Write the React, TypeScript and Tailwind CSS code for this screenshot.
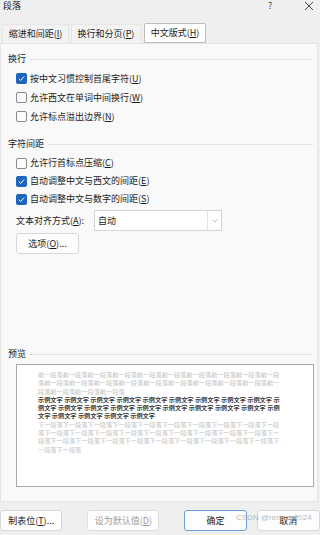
import { ChevronDown } from "lucide-react"

const before = "前一段落".repeat(23)
const sample = Array(23).fill("示例文字").join(" ")
const after = "下一段落".repeat(31)

function Key({ k }: { k: string }) {
    return (
        <>
            (<span className="underline underline-offset-1">{k}</span>)
        </>
    )
}

function Check({ checked, label, k }: { checked?: boolean; label: string; k: string }) {
    return (
        <div className="flex items-center h-[19px] pl-[8px] gap-[3px]">
            {checked ? (
                <span className="w-[11px] h-[11px] rounded-[2px] bg-[#1c66be] flex items-center justify-center">
                    <svg width="7" height="7" viewBox="0 0 8 8" fill="none">
                        <path d="M1 4.2 L3.1 6.2 L7 1.8" stroke="#fff" strokeWidth="1.1" />
                    </svg>
                </span>
            ) : (
                <span className="w-[11px] h-[11px] rounded-[2px] border border-[#8a8a8a] bg-[#fbfbfb]" />
            )}
            <span>
                {label}
                <Key k={k} />
            </span>
        </div>
    )
}

function Section({ title }: { title: string }) {
    return (
        <div className="flex items-center gap-[4px] h-[12px]">
            <span className="text-[#1a1a1a]">{title}</span>
            <div className="flex-1 h-px bg-[#e2e2e2]" />
        </div>
    )
}

export default function App() {
    return (
        <div className="relative w-[320px] h-[535px] overflow-hidden bg-[#efefef] text-[9px] leading-[12px] text-[#1b1b1b] font-['Noto_Sans_CJK_SC',sans-serif]">
            {/* title bar */}
            <div className="flex items-start h-[23px] pl-[3px] pt-[0px]">
                <span className="flex-1">段落</span>
                <span className="w-[36px] text-[#444]">?</span>
                <svg width="10" height="10" viewBox="0 0 10 10" className="mt-[1px] mr-[6px]">
                    <path d="M1 1 L9 9 M9 1 L1 9" stroke="#333" strokeWidth="0.9" />
                </svg>
            </div>

            {/* tabs */}
            <div className="flex items-end h-[20px] pl-[2px] gap-[2px]">
                <div className="w-[67px] h-[19px] flex items-center justify-center border border-[#e6e6e6] border-b-0 bg-[#f2f2f2]">
                    缩进和间距<Key k="I" />
                </div>
                <div className="w-[70px] h-[19px] flex items-center justify-center border border-[#e6e6e6] border-b-0 bg-[#f2f2f2]">
                    换行和分页<Key k="P" />
                </div>
                <div className="w-[62px] h-[20px] flex items-center justify-center border border-[#bdbdbd] bg-white ml-[1px] rounded-t-[2px]">
                    中文版式<Key k="H" />
                </div>
            </div>

            {/* panel */}
            <div className="w-[318px] h-[459px] bg-[#f9f9f9] border border-[#e6e6e6] pl-[7px] pr-[4px] pt-[9px]">
                <Section title="换行" />
                <div className="mt-[4px]">
                    <Check checked label="按中文习惯控制首尾字符" k="U" />
                    <Check label="允许西文在单词中间换行" k="W" />
                    <Check label="允许标点溢出边界" k="N" />
                </div>

                <div className="mt-[12px]">
                    <Section title="字符间距" />
                </div>
                <div className="mt-[4px] [&>div]:h-[18px]">
                    <Check label="允许行首标点压缩" k="C" />
                    <Check checked label="自动调整中文与西文的间距" k="E" />
                    <Check checked label="自动调整中文与数字的间距" k="S" />
                </div>

                <div className="mt-[2px] flex items-center pl-[8px]">
                    <span className="w-[78px]">
                        文本对齐方式<Key k="A" />:
                    </span>
                    <div className="w-[128px] h-[21px] flex items-stretch bg-white border border-[#d4d4d4]">
                        <span className="flex-1 flex items-center pl-[3px]">自动</span>
                        <span className="w-[14px] border-l border-[#e2e2e2] flex items-center justify-center text-[#777]">
                            <ChevronDown size={8} strokeWidth={1.5} />
                        </span>
                    </div>
                </div>

                <div className="mt-[2px] ml-[8px] w-[63px] h-[21px] flex items-center justify-center bg-[#fdfdfd] border border-[#d8d8d8] rounded-[3px]">
                    选项<Key k="O" />...
                </div>

                <div className="mt-[94px]">
                    <Section title="预览" />
                </div>

                <div className="mt-[4px] ml-[8px] w-[298px] h-[123px] bg-white border border-[#a9a9a9] pl-[21px] pr-[32px] pt-[6px] text-[6.2px] leading-[8.3px] break-all">
                    <p className="text-[#c2c2c2]">{before}</p>
                    <p className="text-[#3a3a3a] font-bold">{sample}</p>
                    <p className="text-[#c2c2c2]">{after}</p>
                </div>
            </div>

            {/* footer buttons */}
            <div className="flex mt-[8px] h-[21px]">
                <div className="w-[63px] flex items-center justify-center bg-[#fdfdfd] border border-[#d8d8d8] rounded-[3px]">
                    制表位<Key k="T" />...
                </div>
                <div className="ml-[25px] w-[73px] flex items-center justify-center bg-[#fdfdfd] border border-[#dedede] rounded-[3px] text-[#9d9d9d]">
                    设为默认值<Key k="D" />
                </div>
                <div className="ml-[25px] w-[63px] flex items-center justify-center bg-[#fdfdfd] border border-[#6d9fd9] rounded-[3px]">
                    确定
                </div>
                <div className="ml-[10px] w-[64px] flex items-center justify-center bg-[#fdfdfd] border border-[#d8d8d8] rounded-[3px]">
                    取消
                </div>
            </div>

            <span className="absolute left-[236px] top-[513px] text-[8px] leading-[10px] text-[#a8a8a8]/80 font-['Liberation_Sans',sans-serif]">
                CSDN @renana2024
            </span>
        </div>
    )
}
